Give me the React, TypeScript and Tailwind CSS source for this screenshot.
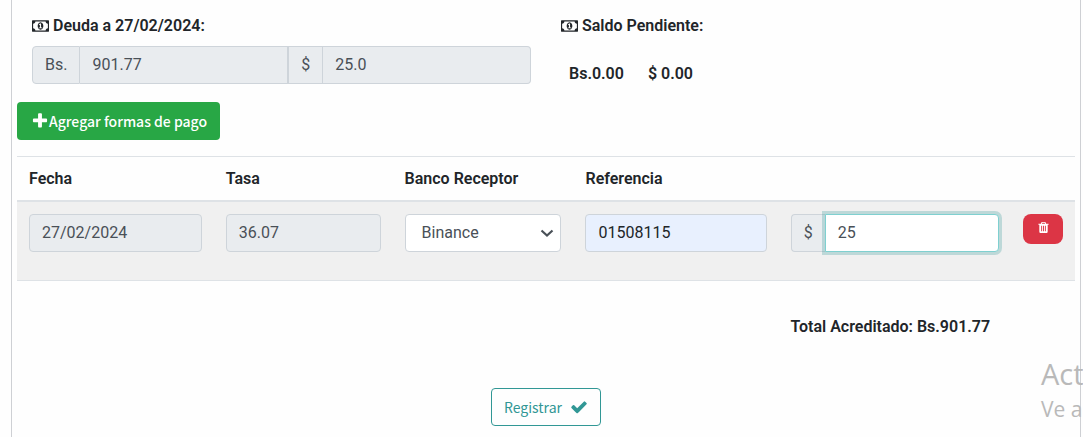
import { useState } from "react";

const MONEY =
  "M768 1152h384v-96h-128v-448h-114l-148 137 77 80q42-37 55-57h2v288h-128v96zm512-256q0 70-21 142t-59.5 134-101.5 101-138 39-138-39-101.5-101-59.5-134-21-142 21-142 59.5-134 101.5-101 138-39 138 39 101.5 101 59.5 134 21 142zm512 256v-512q-106 0-181-75t-75-181h-1152q0 106-75 181t-181 75v512q106 0 181 75t75 181h1152q0-106 75-181t181-75zm128-832v1152q0 26-19 45t-45 19h-1792q-26 0-45-19t-19-45v-1152q0-26 19-45t45-19h1792q26 0 45 19t19 45z";
const PLUS =
  "M1600 736v192q0 40-28 68t-68 28h-416v416q0 40-28 68t-68 28h-192q-40 0-68-28t-28-68v-416h-416q-40 0-68-28t-28-68v-192q0-40 28-68t68-28h416v-416q0-40 28-68t68-28h192q40 0 68 28t28 68v416h416q40 0 68 28t28 68z";
const TRASH =
  "M704 1376v-704q0-14-9-23t-23-9h-64q-14 0-23 9t-9 23v704q0 14 9 23t23 9h64q14 0 23-9t9-23zm256 0v-704q0-14-9-23t-23-9h-64q-14 0-23 9t-9 23v704q0 14 9 23t23 9h64q14 0 23-9t9-23zm256 0v-704q0-14-9-23t-23-9h-64q-14 0-23 9t-9 23v704q0 14 9 23t23 9h64q14 0 23-9t9-23zm-544-992h448l-48-117q-7-9-17-11h-317q-10 2-17 11zm928 32v64q0 14-9 23t-23 9h-96v948q0 83-47 143.500t-113 60.500h-832q-66 0-113-58.500t-47-141.500v-952h-96q-14 0-23-9t-9-23v-64q0-14 9-23t23-9h309l70-167q15-37 54-63t79-26h320q40 0 79 26t54 63l70 167h309q14 0 23 9t9 23z";
const CHECK =
  "M1671 566q0 40-28 68l-724 724-136 136q-28 28-68 28t-68-28l-136-136-362-362q-28-28-28-68t28-68l136-136q28-28 68-28t68 28l294 295 656-657q28-28 68-28t68 28l136 136q28 28 28 68z";

function Icon({ d, width = 1792, className }: { d: string; width?: number; className: string }) {
  return (
    <svg viewBox={`0 0 ${width} 1792`} className={className} fill="currentColor" aria-hidden="true">
      <path d={d} />
    </svg>
  );
}

const FIELD = "h-[38px] w-full min-w-0 rounded border border-[#ced4da] px-3 text-[#495057] outline-none";
const ADDON = "flex h-[38px] shrink-0 items-center border border-[#ced4da] bg-[#e9ecef] px-3 text-[#495057]";
const DEBT_FIELD = "h-[38px] min-w-0 flex-1 border border-l-0 border-[#ced4da] bg-[#e9ecef] px-3 pb-0.5 text-[#495057] outline-none";
const BUTTON_FONT = "font-['Noto_Sans_CJK_SC','Open_Sans',sans-serif]";

export default function App() {
  const [bank, setBank] = useState("Binance");
  const [reference, setReference] = useState("01508115");
  const [amount, setAmount] = useState("25");

  return (
    <div className="relative min-h-screen overflow-hidden bg-[#fefefe] pr-0.5 pl-[11px] font-[Roboto,sans-serif] text-base text-[#212529]">
      <main className="min-h-screen border-x border-[#ced0d4] px-[5px] pt-3.5 pb-[11px]">
        <div className="grid grid-cols-2">
          <section className="px-[15px]">
            <h2 className="flex items-center gap-1 font-semibold">
              <Icon d={MONEY} width={1920} className="h-4 w-[17px]" />
              Deuda a 27/02/2024:
            </h2>
            <div className="mt-2 flex">
              <label htmlFor="debt-bs" className={`${ADDON} rounded-l`}>Bs.</label>
              <input id="debt-bs" readOnly value="901.77" className={DEBT_FIELD} />
              <label htmlFor="debt-usd" className={ADDON}>$</label>
              <input id="debt-usd" readOnly value="25.0" className={`${DEBT_FIELD} rounded-r`} />
            </div>
          </section>
          <section className="px-[15px]">
            <h2 className="flex items-center gap-1 font-semibold">
              <Icon d={MONEY} width={1920} className="h-4 w-[17px]" />
              Saldo Pendiente:
            </h2>
            <div className="mt-6 flex gap-6 px-2 font-semibold">
              <span>Bs.0.00</span>
              <span>$ 0.00</span>
            </div>
          </section>
        </div>

        <button
          type="button"
          className={`mt-4 flex h-[38px] items-center rounded bg-[#28a745] pr-[13px] pl-3.5 text-sm leading-6 font-medium text-white ${BUTTON_FONT}`}
        >
          <Icon d={PLUS} className="h-[18px] w-[18px]" />
          Agregar formas de pago
        </button>

        <table className="mt-4 w-full table-fixed border-collapse">
          <colgroup>
            <col className="w-[18.6%]" />
            <col className="w-[16.9%]" />
            <col className="w-[17.1%]" />
            <col className="w-[19.4%]" />
            <col className="w-[22%]" />
            <col className="w-[6%]" />
          </colgroup>
          <thead>
            <tr className="h-11 border-t border-b-2 border-[#dee2e6] text-left">
              <th scope="col" className="px-3 pt-0.5 font-semibold">Fecha</th>
              <th scope="col" className="px-3 pt-0.5 font-semibold">Tasa</th>
              <th scope="col" className="px-3 pt-0.5 font-semibold">Banco Receptor</th>
              <th scope="col" className="px-3 pt-0.5 font-semibold">Referencia</th>
              <td />
              <td />
            </tr>
          </thead>
          <tbody>
            <tr className="h-20 border-b border-[#dee2e6] bg-[#f0f0f0] align-top">
              <td className="px-3 pt-3">
                <input aria-label="Fecha" readOnly value="27/02/2024" className={`${FIELD} bg-[#e9ecef]`} />
              </td>
              <td className="px-3 pt-3">
                <input aria-label="Tasa" readOnly value="36.07" className={`${FIELD} bg-[#e9ecef]`} />
              </td>
              <td className="px-3 pt-3">
                <div className="relative">
                  <select
                    aria-label="Banco Receptor"
                    value={bank}
                    onChange={(e) => setBank(e.target.value)}
                    className="h-[38px] w-full appearance-none rounded border border-[#ced4da] bg-white px-4 text-[#495057] outline-none"
                  >
                    <option>Binance</option>
                  </select>
                  <svg
                    viewBox="0 0 14 10"
                    className="pointer-events-none absolute top-3.5 right-[7px] h-2.5 w-3.5"
                    fill="none"
                    stroke="#495057"
                    strokeWidth="2.2"
                    aria-hidden="true"
                  >
                    <path d="M1.500 2.500 7 7.500l5.500-5" />
                  </svg>
                </div>
              </td>
              <td className="px-3 pt-3">
                <input
                  aria-label="Referencia"
                  value={reference}
                  onChange={(e) => setReference(e.target.value)}
                  className="h-[38px] w-full rounded border border-[#ced4da] bg-[#e8f0fe] px-3 text-[#212529] outline-none"
                />
              </td>
              <td className="px-3 pt-3">
                <div className="flex">
                  <label htmlFor="amount" className={`${ADDON} rounded-l border-r-0`}>$</label>
                  <input
                    id="amount"
                    value={amount}
                    onChange={(e) => setAmount(e.target.value)}
                    className="h-[38px] min-w-0 flex-1 rounded-r border border-[#7fd0d0] bg-white px-3 text-[#495057] shadow-[0_0_0_3px_rgba(56,153,153,0.28)] outline-none"
                  />
                </div>
              </td>
              <td className="pt-3 pl-3">
                <button
                  type="button"
                  aria-label="Eliminar"
                  className="flex h-[30px] w-10 items-center justify-center rounded-lg bg-[#dc3545] pb-0.5 text-white"
                >
                  <Icon d={TRASH} className="h-[13px] w-[13px]" />
                </button>
              </td>
            </tr>
          </tbody>
        </table>

        <p className="mt-[34px] ml-[73.1%] font-semibold">Total Acreditado: Bs.901.77</p>

        <div className="mt-[49px] flex justify-center">
          <button
            type="button"
            className={`flex h-[38px] items-center gap-2 rounded border border-[#319795] px-3 text-sm leading-6 text-[#319795] ${BUTTON_FONT}`}
          >
            Registrar
            <Icon d={CHECK} className="h-[18px] w-[18px]" />
          </button>
        </div>
      </main>

      <div className="pointer-events-none absolute top-[356px] left-[1041px] font-['Open_Sans',sans-serif] whitespace-nowrap text-[#b9b9b9]">
        <p className="text-[29px] leading-9">Act</p>
        <p className="text-[21px] leading-[34px]">Ve a</p>
      </div>
    </div>
  );
}
